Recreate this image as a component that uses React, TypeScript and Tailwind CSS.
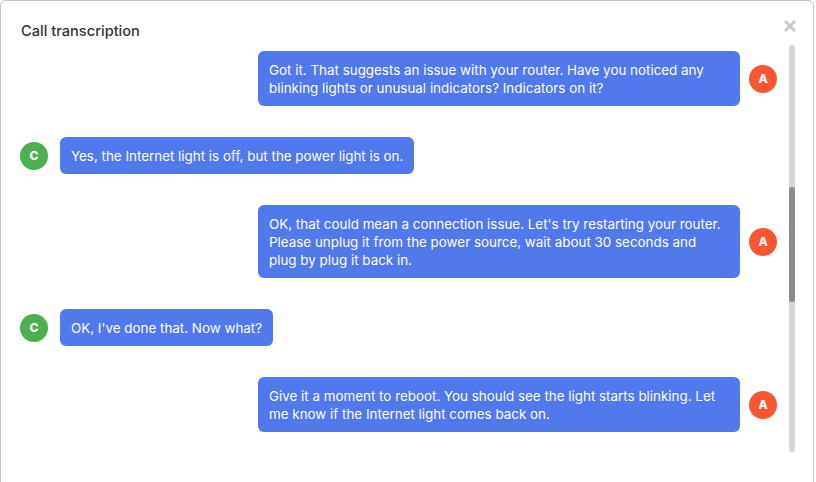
import React from "react";

type Msg = { from: "agent" | "customer"; lines: string[] };

const messages: Msg[] = [
  {
    from: "agent",
    lines: [
      "Got it. That suggests an issue with your router. Have you noticed any",
      "blinking lights or unusual indicators? Indicators on it?",
    ],
  },
  { from: "customer", lines: ["Yes, the Internet light is off, but the power light is on."] },
  {
    from: "agent",
    lines: [
      "OK, that could mean a connection issue. Let's try restarting your router.",
      "Please unplug it from the power source, wait about 30 seconds and",
      "plug by plug it back in.",
    ],
  },
  { from: "customer", lines: ["OK, I've done that. Now what?"] },
  {
    from: "agent",
    lines: [
      "Give it a moment to reboot. You should see the light starts blinking. Let",
      "me know if the Internet light comes back on.",
    ],
  },
];

function Avatar({ letter, color }: { letter: string; color: string }) {
  return (
    <div
      className={`w-[28px] h-[28px] shrink-0 rounded-full flex items-center justify-center text-white text-[12px] font-extrabold ${color}`}
    >
      {letter}
    </div>
  );
}

function Bubble({ lines, className }: { lines: string[]; className?: string }) {
  return (
    <div className={`bg-[#5079ec] text-white text-[13.4px] leading-[18px] rounded-[6px] px-[11px] pt-[10px] pb-[9px] ${className ?? ""}`}>
      {lines.map((l, i) => (
        <div key={i} className="whitespace-nowrap">{l}</div>
      ))}
    </div>
  );
}

export default function App() {
  return (
    <div className="h-[482px] overflow-hidden bg-white font-['Inter',sans-serif]">
      <div className="relative w-[814px] h-[520px] border border-[#c4c4c4] rounded-md bg-white">
        <div className="h-[44px] pl-[20px] pt-[20px]">
          <div className="text-[14.6px] font-medium text-[#333] leading-[20px]">Call transcription</div>
        </div>
        <button className="absolute top-[18px] right-[16px] w-[14px] h-[14px]">
          <svg viewBox="0 0 14 14" width="14" height="14">
            <path d="M2 2 L12 12 M12 2 L2 12" stroke="#c9c9c9" strokeWidth="3" />
          </svg>
        </button>

        <div className="flex">
          <div className="w-[757px] ml-[19px] pt-[6px] flex flex-col gap-[31px]">
            {messages.map((m, i) =>
              m.from === "agent" ? (
                <div key={i} className="flex items-center justify-end">
                  <Bubble lines={m.lines} className="w-[482px]" />
                  <div className="ml-[9px]">
                    <Avatar letter="A" color="bg-[#fb5532]" />
                  </div>
                </div>
              ) : (
                <div key={i} className="flex items-center">
                  <Avatar letter="C" color="bg-[#4caf50]" />
                  <Bubble lines={m.lines} className="ml-[12px]" />
                </div>
              )
            )}
          </div>
          <div className="ml-[12px] w-[6px] h-[407px] rounded-full bg-[#d6d6d6] flex flex-col">
            <div className="h-[142px]" />
            <div className="h-[115px] rounded-full bg-[#8c8c8c]" />
          </div>
        </div>
      </div>
    </div>
  );
}
